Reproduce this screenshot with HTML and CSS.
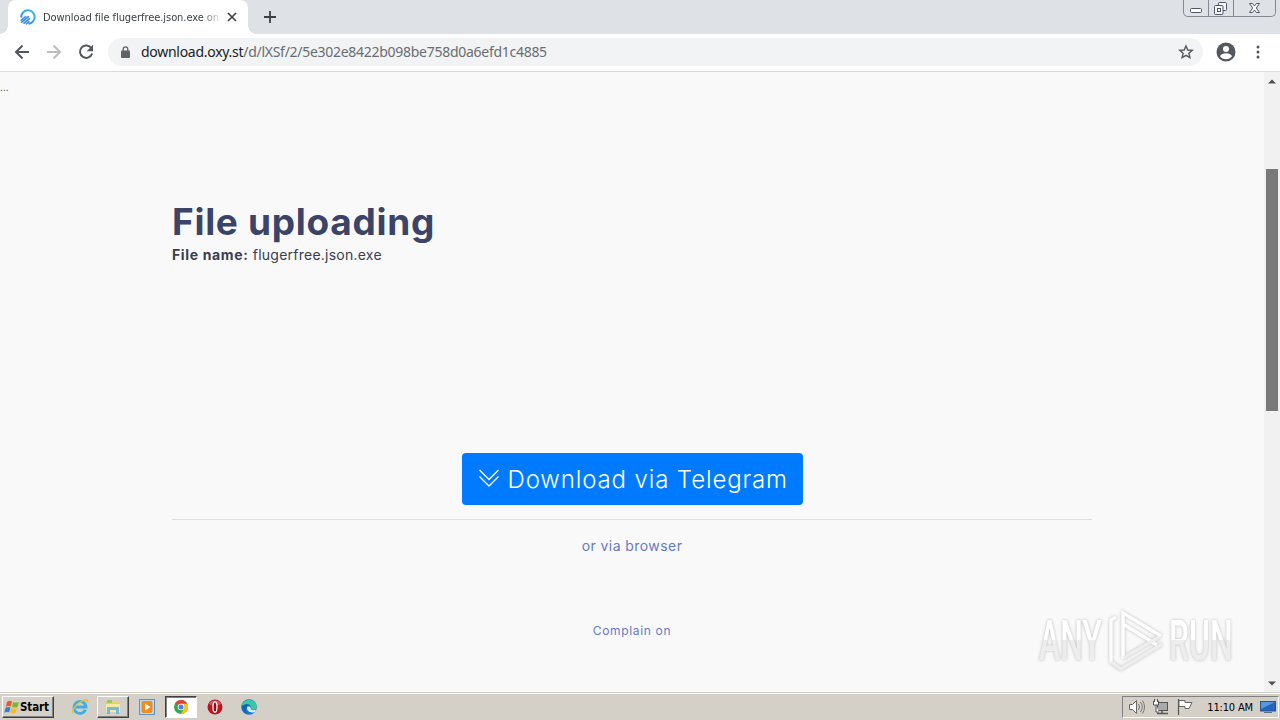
FILE: index.html
```html
<!DOCTYPE html>
<html lang="en">
<head>
    <meta charset="UTF-8">
    <meta name="viewport" content="width=device-width, initial-scale=1.0">
    <title>Download file flugerfree.json.exe</title>
    <link rel="stylesheet" href="styles.css">
</head>
<body>
    <div class="screen">
        <!-- Tabs -->
        <div class="tab-strip">
            <div class="tab-edge left"></div>
            <div class="tab">
                <svg class="favicon" width="16" height="16" viewBox="0 0 16 16">
                    <defs>
                        <linearGradient id="fav" x1="0" y1="1" x2="1" y2="0">
                            <stop offset="0" stop-color="#2f7fe8"/>
                            <stop offset="1" stop-color="#35bff0"/>
                        </linearGradient>
                    </defs>
                    <path d="M1.300 8.500A6.700 6.700 0 1 1 8.500 14.700" fill="none" stroke="url(#fav)" stroke-width="2"/>
                    <path d="M1.200 11.200L5.800 7.500M1.800 13.200L8.500 7.700M4 14.200L9.500 9.700M6.300 14.800L9 12.600" stroke="#3188e8" stroke-width="1.500" stroke-linecap="round"/>
                </svg>
                <span class="tab-title">Download file flugerfree.json.exe on</span>
                <svg width="10" height="10" viewBox="0 0 10 10"><path d="M1 1l8 8M9 1L1 9" stroke="#3c4043" stroke-width="1.600"/></svg>
            </div>
            <div class="tab-edge right"></div>
            <svg class="new-tab" width="12" height="12" viewBox="0 0 12 12"><path d="M6 0v12M0 6h12" stroke="#3c4043" stroke-width="1.800"/></svg>
            <div class="window-buttons">
                <div class="win-btn"><svg width="24" height="16" viewBox="0 0 24 16"><rect x="6.500" y="8.500" width="11" height="4" rx="1" fill="#fff" stroke="#535666"/></svg></div>
                <div class="win-btn"><svg width="24" height="16" viewBox="0 0 24 16"><g fill="#f4f5f7" stroke="#535666"><rect x="9.500" y="2.500" width="8" height="8" rx="1"/><rect x="5.500" y="5.500" width="8.500" height="9" rx="1"/><rect x="8.500" y="8.500" width="3" height="3"/></g></svg></div>
                <div class="win-btn"><svg width="41" height="16" viewBox="0 0 41 16"><path d="M15.500 3.500h3l2 2.500 2-2.500h3l-3.200 4.500 3.200 4.500h-3l-2-2.500-2 2.500h-3l3.200-4.500z" fill="#fff" stroke="#535666"/></svg></div>
            </div>
        </div>

        <!-- Address bar -->
        <div class="toolbar">
            <svg class="nav-icon" width="16" height="16" viewBox="0 0 16 16"><path d="M15 8H2.500M8.500 1.500L2 8l6.500 6.500" fill="none" stroke="#54585c" stroke-width="2"/></svg>
            <svg class="nav-icon" width="16" height="16" viewBox="0 0 16 16"><path d="M1 8h12.500M7.500 1.500L14 8l-6.500 6.500" fill="none" stroke="#babcbe" stroke-width="2"/></svg>
            <svg class="nav-icon" width="16" height="16" viewBox="0 0 16 16"><path d="M13.400 4.300A6.200 6.200 0 1 0 14.100 9.500" fill="none" stroke="#54585c" stroke-width="2"/><path d="M15 .8v6.400H8.700z" fill="#54585c"/></svg>
            <div class="omnibox">
                <svg width="9" height="12" viewBox="0 0 9 12"><rect x="0" y="4.500" width="9" height="7.500" rx="1" fill="#5f6368"/><path d="M2.200 5V3.200a2.300 2.300 0 0 1 4.600 0V5" fill="none" stroke="#5f6368" stroke-width="1.300"/></svg>
                <span class="url"><span class="host">download.oxy.st</span>/d/lXSf/2/5e302e8422b098be758d0a6efd1c4885</span>
                <svg class="star" width="16" height="16" viewBox="0 0 16 16"><path d="M8 2l1.800 4 4.400.4-3.300 2.900 1 4.300L8 11.300l-3.900 2.300 1-4.300L1.800 6.400 6.200 6z" fill="none" stroke="#54585c" stroke-width="1.400"/></svg>
            </div>
            <svg class="avatar" width="20" height="20" viewBox="0 0 20 20"><circle cx="10" cy="10" r="9.500" fill="#54585c"/><circle cx="10" cy="7" r="3" fill="#fff"/><path d="M4 14.300c1.300-4 10.700-4 12 0a7.400 7.400 0 0 1-12 0z" fill="#fff"/></svg>
            <svg class="menu-dots" width="4" height="14" viewBox="0 0 4 14"><g fill="#54585c"><circle cx="2" cy="2" r="1.500"/><circle cx="2" cy="7" r="1.500"/><circle cx="2" cy="12" r="1.500"/></g></svg>
        </div>

        <!-- Page -->
        <div class="viewport">
            <div class="page">
                <div class="dots">...</div>
                <div class="container">
                    <h1>File uploading</h1>
                    <p class="file-name"><b>File name:</b> <span>flugerfree.json.exe</span></p>
                    <a class="btn-telegram">
                        <svg width="22" height="20" viewBox="0 0 22 20"><path d="M1.500 1l9.500 9.500L20.500 1M1.500 7.500L11 17l9.500-9.500" fill="none" stroke="#fff" stroke-width="1.300"/></svg>
                        <span>Download via Telegram</span>
                    </a>
                    <hr>
                    <a class="link-browser">or via browser</a>
                    <a class="link-complain">Complain on</a>
                </div>
                <svg class="watermark" width="212" height="76" viewBox="0 0 212 76">
                    <defs>
                        <linearGradient id="wm" gradientUnits="userSpaceOnUse" x1="0" y1="-39" x2="0" y2="0">
                            <stop offset=".5" stop-color="#ffffff"/>
                            <stop offset=".5" stop-color="#ededed"/>
                        </linearGradient>
                    </defs>
                    <g class="wm-text" fill="url(#wm)">
                        <text transform="translate(10 57) scale(.58 1)">ANY</text>
                        <text transform="translate(140 57) scale(.58 1)">RUN</text>
                    </g>
                    <g fill="none" stroke-width="3.500">
                        <path d="M82 60V17l5-3" stroke="#fcfcfc"/>
                        <path d="M94 56V10l38 23" stroke="#fff"/>
                        <path d="M94 21l34 21" stroke="#fff"/>
                        <path d="M82 59l10 7 41-25M94 55l36-21" stroke="#ededed"/>
                    </g>
                </svg>
            </div>
            <div class="scrollbar">
                <svg width="8" height="5" viewBox="0 0 8 5"><path d="M0 4.500L4 .5l4 4z" fill="#505050"/></svg>
                <div class="thumb"></div>
                <svg width="8" height="5" viewBox="0 0 8 5"><path d="M0 .5l4 4 4-4z" fill="#505050"/></svg>
            </div>
        </div>

        <!-- Taskbar -->
        <div class="taskbar">
            <div class="start">
                <svg width="16" height="16" viewBox="0 0 16 16"><path d="M3 3q2.500-2 5-.5L6.800 7.500q-2.500-1.200-5 .3z" fill="#e85b24"/><path d="M9 3q2.500 1.500 6 0l-1.500 5q-3 1.200-5.500-.3z" fill="#7db72f"/><path d="M1.500 8.800q2.500-1.500 5-.3L5.300 13.300q-2.500-1-5 .5z" fill="#3c7fd0"/><path d="M7.600 9q2.700 1.500 5.500.2l-1.400 4.900q-3 1-5.400-.5z" fill="#f7bd22"/></svg>
                <span>Start</span>
            </div>
            <div class="task ie">
                <svg width="18" height="18" viewBox="0 0 18 18"><path d="M14.500 11.800A6 6 0 1 1 15 9H4.500" fill="none" stroke="#3caee8" stroke-width="2.800"/><path d="M2 15.500C-1 12 10 1.500 15.500 2c1.500.2 1.500 1.500.8 3" fill="none" stroke="#e9bd42" stroke-width="1.400"/></svg>
            </div>
            <div class="task raised">
                <svg width="18" height="16" viewBox="0 0 18 16"><path d="M1 2h6l1 1h8v10H1z" fill="#e8cf72"/><path d="M3 1h5v3H3z" fill="#91c969"/><path d="M2 5h14v8H2z" fill="#f7eaa5"/><path d="M3 15V9q0-1 1-1h10q1 0 1 1v6h-3v-4H6v4z" fill="#6ebbe0"/></svg>
            </div>
            <div class="task">
                <svg width="16" height="16" viewBox="0 0 16 16"><rect x=".5" y=".5" width="15" height="15" fill="#b9d9f1" stroke="#5794ca"/><rect x="2.500" y="2" width="11" height="12" rx="2" fill="#f28b1d"/><path d="M6 4.500v7L11.500 8z" fill="#fff"/></svg>
            </div>
            <div class="task pressed">
                <svg width="14" height="14" viewBox="0 0 14 14"><circle cx="7" cy="7" r="7" fill="#35a853"/><path d="M7 7L1 3.400A7 7 0 0 1 13.200 3.700H7z" fill="#e34133"/><path d="M7 3.700h6.200A7 7 0 0 1 6.700 14L10 8.500z" fill="#fbc116"/><circle cx="7" cy="7" r="3.300" fill="#fff"/><circle cx="7" cy="7" r="2.500" fill="#4383ef"/></svg>
            </div>
            <div class="task">
                <svg width="16" height="16" viewBox="0 0 16 16"><circle cx="8" cy="8" r="7.500" fill="#bd1520"/><path d="M2 5a7 7 0 0 1 12 0q-6 3-12 0z" fill="#d65b61"/><ellipse cx="8" cy="8" rx="2" ry="5.200" fill="#8f0d16" stroke="#fff" stroke-width="1.300"/></svg>
            </div>
            <div class="task">
                <svg width="16" height="16" viewBox="0 0 16 16"><circle cx="8" cy="8" r="7.800" fill="#1579ce"/><path d="M.5 6.500C2 0 14 -2 15.800 7.500c.2 3-3 4-6 3 2-3-2-7-9.300-4z" fill="#3cc8a1"/><path d="M6.500 7c-2 4 2 8 7.500 6l1.300-2.600c-2 1.300-5 1-5.800-.3.700-.9.500-2.600-3-3.100z" fill="#d5eef5"/><path d="M1 7.500Q7 3 9.300 7C5 6.500 4 10 6 14.500Q1 13 1 7.500z" fill="#1265b4"/></svg>
            </div>
            <div class="tray">
                <svg width="18" height="16" viewBox="0 0 18 16"><path d="M.5 5.500h3l4-4v13l-4-4h-3z" fill="#fff" stroke="#686868"/><path d="M9.500 5q2 3 0 6M11.500 3q3.500 5 0 10M13.500 1.500q4 6.500 0 13" fill="none" stroke="#777"/></svg>
                <svg width="18" height="16" viewBox="0 0 18 16"><rect x="4.500" y="3.500" width="10" height="8" fill="#aaa" stroke="#555"/><path d="M4 14.500h11M9 12v2" stroke="#555" stroke-width="1.500"/><path d="M.5 2v4h5V2M1.500 0v3M4.500 0v3M3 6v7h3" fill="#fff" stroke="#555"/></svg>
                <svg width="17" height="16" viewBox="0 0 17 16"><path d="M1.500 0v16" stroke="#555" stroke-width="1.200"/><path d="M2 1.500h6v2h7l-3 6H8v-2H2z" fill="#fff" stroke="#666"/></svg>
                <span class="clock">11:10 AM</span>
                <svg width="16" height="14" viewBox="0 0 16 14"><rect x=".5" y="1.500" width="15" height="9.500" fill="#2564bd" stroke="#29548c"/><path d="M1 2h14L1 9z" fill="#5598de"/><path d="M4 12.500h8" stroke="#5a6f86"/></svg>
            </div>
        </div>
    </div>
</body>
</html>
```
FILE: styles.css
```css
* {
    margin: 0;
    padding: 0;
    box-sizing: border-box;
}

body {
    font-family: Inter, "Liberation Sans", sans-serif;
    background: #f9f9f9;
    overflow: hidden;
}

svg {
    display: block;
    flex-shrink: 0;
}

.screen {
    width: 1280px;
    height: 720px;
    display: flex;
    flex-direction: column;
}

/* Tabs */
.tab-strip {
    height: 34px;
    background: #dee1e6;
    display: flex;
    align-items: flex-start;
}

.tab-edge {
    width: 8px;
    height: 34px;
}

.tab-edge.left {
    background: radial-gradient(circle at 0 0, transparent 7.5px, #fff 8px) 0 26px / 8px 8px no-repeat;
}

.tab-edge.right {
    background: radial-gradient(circle at 100% 0, transparent 7.5px, #fff 8px) 0 26px / 8px 8px no-repeat;
}

.tab {
    width: 240px;
    height: 34px;
    padding: 0 11px 0 12px;
    background: #fff;
    border-radius: 8px 8px 0 0;
    display: flex;
    align-items: center;
}

.tab-title {
    width: 178px;
    margin: 0 6px 0 7px;
    font-family: "DejaVu Sans Condensed", "DejaVu Sans", sans-serif;
    font-stretch: condensed;
    font-size: 11px;
    letter-spacing: -0.07px;
    color: #3c4043;
    white-space: nowrap;
    overflow: hidden;
    mask-image: linear-gradient(to right, #000 158px, transparent 180px);
}

.new-tab {
    margin: 11px 0 0 8px;
}

.window-buttons {
    height: 17px;
    margin-left: auto;
    margin-right: 4px;
    display: flex;
    border: 1px solid #858891;
    border-top: none;
    border-radius: 0 0 5px 5px;
}

.win-btn + .win-btn {
    border-left: 1px solid #858891;
}

/* Address bar */
.toolbar {
    height: 38px;
    padding: 0 20px 2px 14px;
    background: #fff;
    border-bottom: 1px solid #d9dadd;
    display: flex;
    align-items: center;
}

.nav-icon {
    margin-right: 16px;
}

.omnibox {
    width: 1095px;
    height: 28px;
    margin-left: -2px;
    padding: 0 9px 0 13px;
    background: #f1f3f4;
    border-radius: 14px;
    display: flex;
    align-items: center;
}

.url {
    margin-left: 11px;
    font-family: "Noto Sans", sans-serif;
    font-size: 14px;
    line-height: 20px;
    letter-spacing: -0.28px;
    color: #696d71;
}

.host {
    color: #202124;
}

.star {
    margin-left: auto;
}

.avatar {
    margin-left: 13px;
}

.menu-dots {
    margin-left: auto;
}

/* Page */
.viewport {
    height: 620px;
    display: flex;
}

.page {
    position: relative;
    width: 1264px;
    background: #f9f9f9;
}

.dots {
    height: 20px;
    padding-top: 7px;
    font-size: 10px;
    line-height: 16px;
    color: #444;
}

.container {
    width: 920px;
    margin: 0 auto;
    padding-top: 108px;
    display: flex;
    flex-direction: column;
    align-items: center;
}

h1 {
    align-self: flex-start;
    font-size: 37px;
    font-weight: 700;
    line-height: 44px;
    letter-spacing: 0.7px;
    color: #3b4368;
}

.file-name {
    align-self: flex-start;
    margin-top: 1px;
    font-size: 14px;
    line-height: 20px;
    letter-spacing: 0.24px;
    color: #3a3e52;
}

.file-name b {
    letter-spacing: 0.65px;
}

.btn-telegram {
    width: 341px;
    height: 52px;
    margin-top: 188px;
    padding-left: 16px;
    background: #007bff;
    border-radius: 4px;
    color: #fff;
    font-size: 24px;
    font-weight: 300;
    letter-spacing: 0.87px;
    display: flex;
    align-items: center;
    gap: 8px;
    white-space: nowrap;
}

hr {
    width: 920px;
    margin-top: 14px;
    border: none;
    border-top: 1px solid #e0e0e0;
}

.link-browser {
    margin-top: 16px;
    font-size: 14px;
    line-height: 20px;
    letter-spacing: 0.43px;
    color: #667bc4;
}

.link-complain {
    margin-top: 66px;
    font-size: 12px;
    line-height: 18px;
    letter-spacing: 0.65px;
    color: #667bc4;
}

.watermark {
    position: absolute;
    left: 1029px;
    top: 531px;
    filter: drop-shadow(0 0 1.5px rgba(0, 0, 0, 0.25));
}

.wm-text {
    font-family: Roboto, sans-serif;
    font-size: 55px;
    font-weight: 500;
}

/* Scrollbar */
.scrollbar {
    width: 16px;
    padding: 7px 0 6px 4px;
    background: #f1f1f1;
    display: flex;
    flex-direction: column;
    justify-content: space-between;
}

.thumb {
    width: 12px;
    height: 242px;
    margin: 85px 0 auto -2px;
    background: #787878;
}

/* Taskbar */
.taskbar {
    height: 28px;
    padding: 2px 1px 1px 2px;
    background: #d4d0c8;
    border-top: 1px solid #d4d0c8;
    box-shadow: inset 0 1px #fff;
    display: flex;
    align-items: center;
}

.start {
    width: 52px;
    height: 22px;
    margin-right: 13px;
    padding-left: 1px;
    border: 1px solid;
    border-color: #fff #404040 #404040 #fff;
    box-shadow: inset -1px -1px #808080;
    display: flex;
    align-items: center;
    gap: 0;
    font-family: "DejaVu Sans Condensed", "DejaVu Sans", sans-serif;
    font-stretch: condensed;
    font-size: 11.5px;
    font-weight: 700;
    letter-spacing: -0.1px;
}

.task {
    width: 32px;
    height: 22px;
    margin-right: 2px;
    border: 1px solid transparent;
    display: flex;
    align-items: center;
    justify-content: center;
}

.task.ie {
    width: 26px;
    margin-right: 4px;
}

.raised {
    border-color: #fff #404040 #404040 #fff;
    box-shadow: inset -1px -1px #808080;
}

.pressed {
    background: #fff;
    border-color: #404040 #fff #fff #404040;
    box-shadow: inset 1px 1px #808080;
}

.tray {
    width: 157px;
    height: 22px;
    margin-left: auto;
    padding: 0 2px 0 6px;
    border: 1px solid;
    border-color: #808080 #fff #fff #808080;
    display: flex;
    align-items: center;
    gap: 6px;
}

.clock {
    margin: 0 1px 0 auto;
    font-family: "DejaVu Sans Condensed", "DejaVu Sans", sans-serif;
    font-stretch: condensed;
    font-size: 11px;
    letter-spacing: -0.15px;
    white-space: nowrap;
}
```
